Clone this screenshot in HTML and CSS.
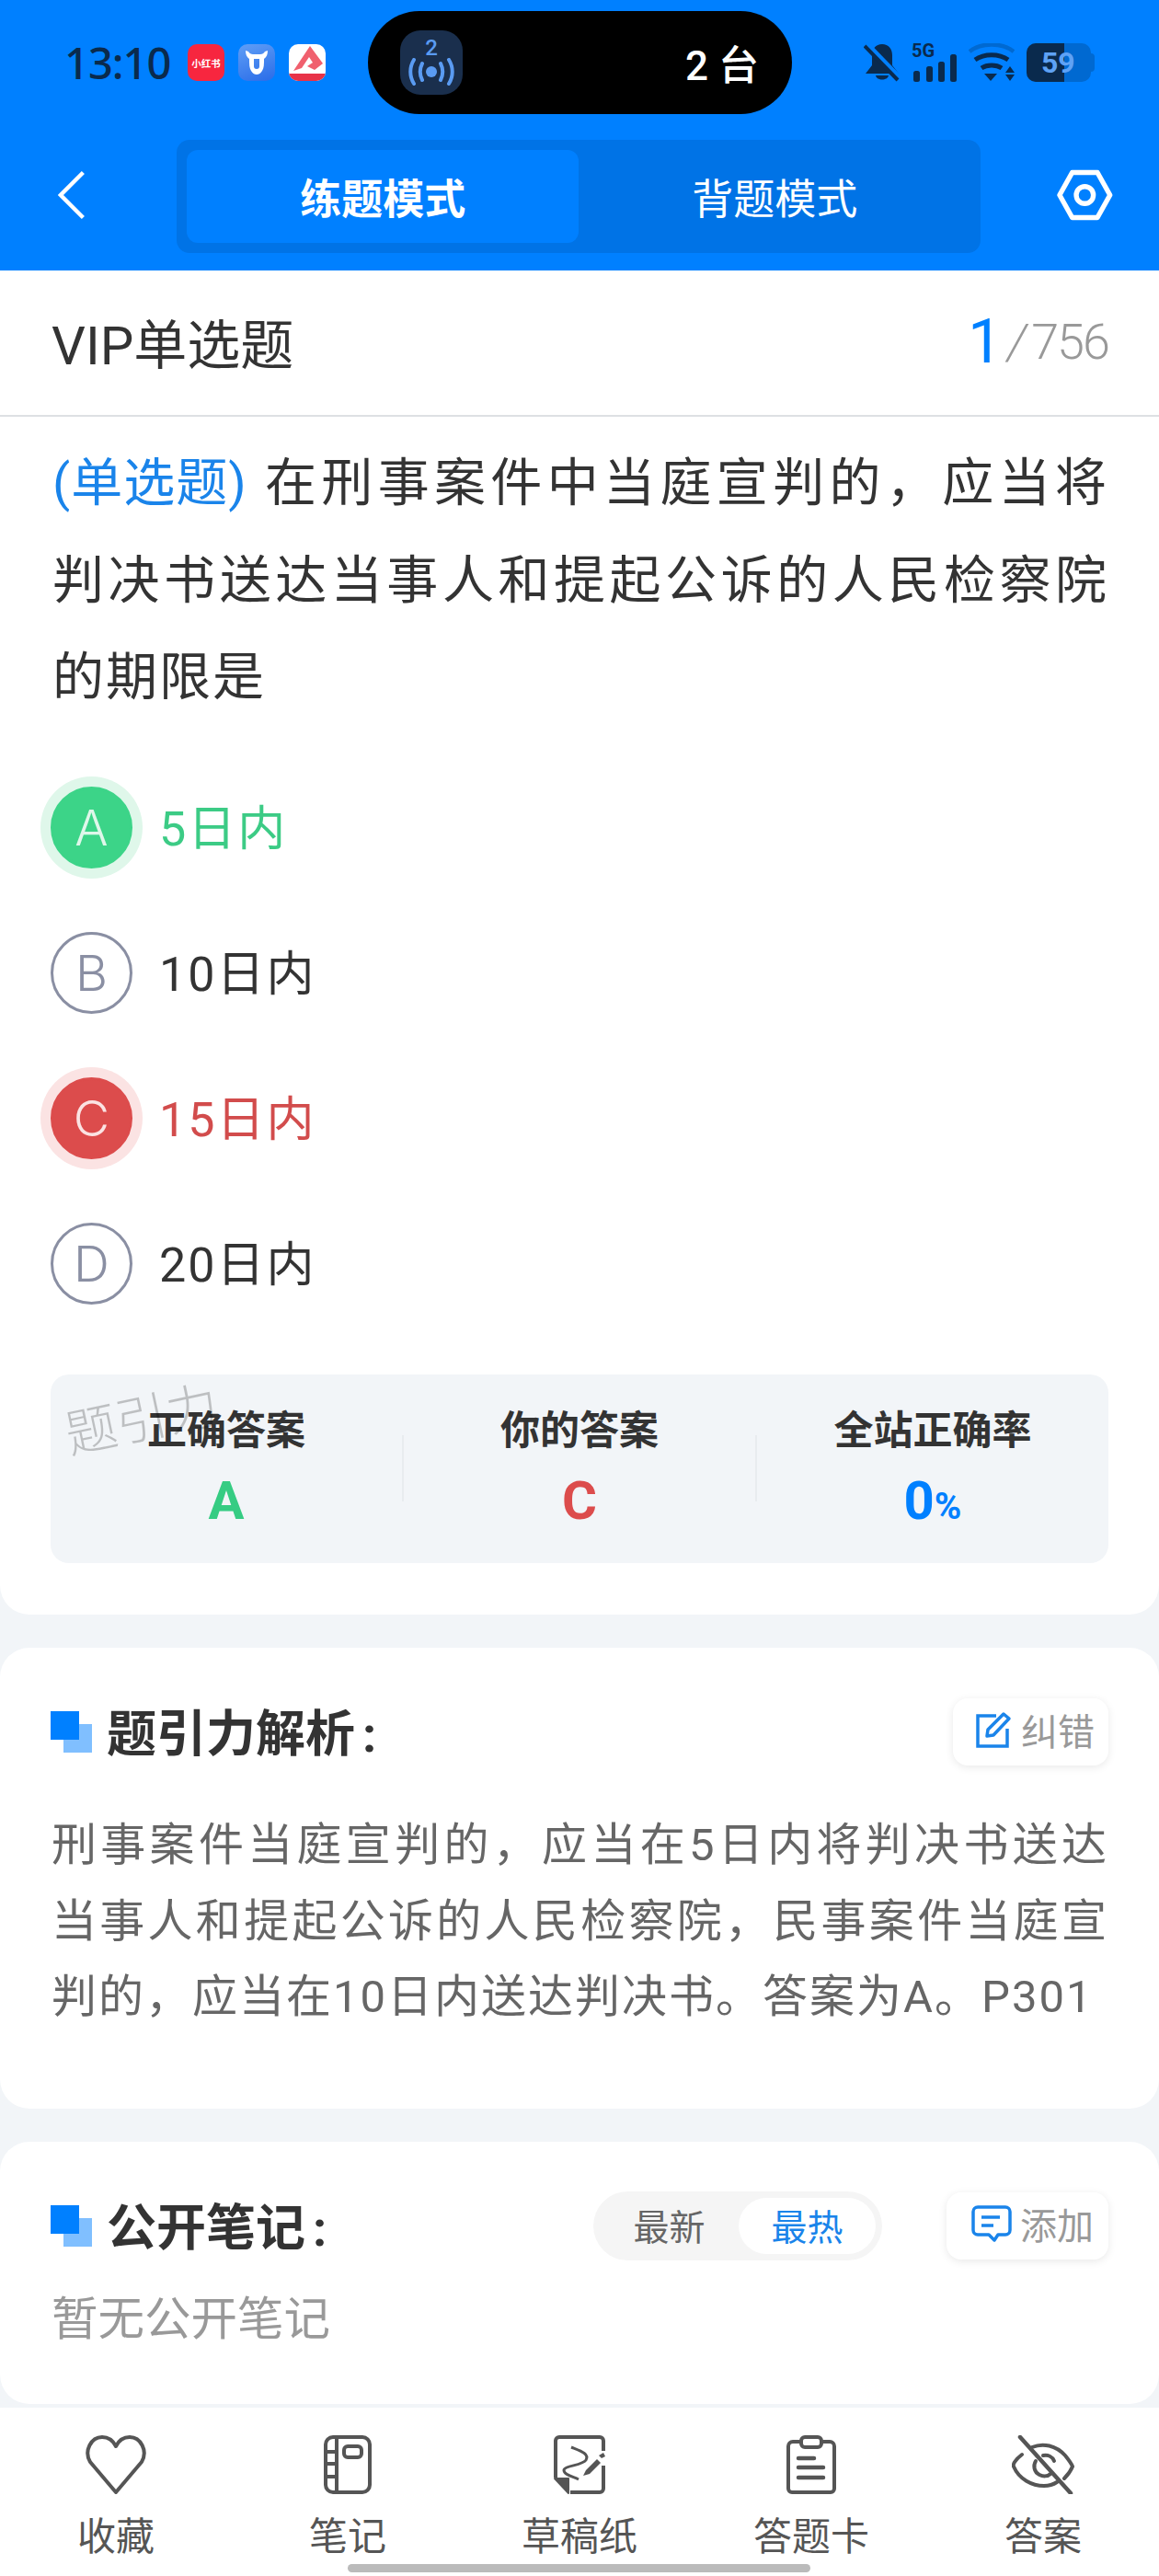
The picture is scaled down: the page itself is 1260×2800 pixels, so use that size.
FILE: index.html
```html
<!DOCTYPE html>
<html lang="zh-CN">
<head>
    <meta charset="UTF-8">
    <meta name="viewport" content="width=device-width, initial-scale=1.0">
    <title>练题模式</title>
    <link rel="stylesheet" href="styles.css">
</head>
<body>
    <div class="phone">
        <header class="top">
            <div class="status">
                <div class="status-left">
                    <span class="time">13:10</span>
                    <span class="app-icon app-red">小红书</span>
                    <span class="app-icon app-blue">
                        <svg viewBox="0 0 40 40" width="40" height="40"><path fill-rule="evenodd" fill="#fff" d="M8 7l3 1c1 2 3 3 5 3h8c2 0 4-1 5-3l3-1c0 4-1 7-4 9 0 6 0 10-2 13-2 3-4 4-6 4s-4-1-6-4c-2-3-2-7-2-13-3-2-4-5-4-9zM17 16v8c0 2 1 3 3 3s3-1 3-3v-8z"/></svg>
                    </span>
                    <span class="app-icon app-white">
                        <svg viewBox="0 0 40 40" width="40" height="40"><path d="M23 2L5 29l9-3 8-12 4 6-6 4 8 4 9-7z" fill="#f0606e"/><path d="M0 32h40v8H0z" fill="#e83348"/></svg>
                    </span>
                </div>
                <div class="island">
                    <div class="island-icon">
                        <span class="island-num">2</span>
                        <svg viewBox="0 0 50 30" width="50" height="30" fill="none" stroke="#5a9bf2" stroke-width="4" stroke-linecap="round"><circle cx="25" cy="15" r="6" fill="#5a9bf2" stroke="none"/><path d="M15 6c-3 6-3 12 0 18M35 6c3 6 3 12 0 18M6 2c-5 8-5 18 0 26M44 2c5 8 5 18 0 26"/></svg>
                    </div>
                    <span class="island-text">2 台</span>
                </div>
                <div class="status-right">
                    <svg viewBox="0 0 40 42" width="40" height="42"><path d="M20 1c-7 0-11 5-11 12v11l-7 9h36l-7-9V13c0-7-4-12-11-12z" fill="#0a2a4d"/><path d="M13 35c1 6 13 6 14 0z" fill="#0a2a4d"/><path d="M4 1l36 37" stroke="#0080ff" stroke-width="5"/><path d="M1 3l36 37" stroke="#0a2a4d" stroke-width="4"/></svg>
                    <div class="signal">
                        <span class="five-g">5G</span>
                        <svg viewBox="0 0 50 30" width="50" height="30" fill="#0a2a4d"><rect x="2" y="18" width="7" height="12" rx="2.5"/><rect x="16" y="13" width="7" height="17" rx="2.5"/><rect x="29" y="8" width="7" height="22" rx="2.5"/><rect x="42" y="0" width="7" height="30" rx="2.5"/></svg>
                    </div>
                    <svg viewBox="0 0 50 42" width="50" height="42"><path d="M1 9c13-10 35-10 48 0" fill="none" stroke="#0069d1" stroke-width="4.5"/><path d="M7 18c10-7 26-7 36 0M14 27c6-4 16-4 22 0" fill="none" stroke="#0a2a4d" stroke-width="5"/><path d="M17 33h14l-7 8z" fill="#0a2a4d"/><path d="M45 25l5 7H40zM45 41l5-7H40z" fill="#0a2a4d"/></svg>
                    <div class="battery">
                        <div class="battery-fill"></div>
                        <span class="battery-num">59</span>
                        <span class="battery-nub"></span>
                    </div>
                </div>
            </div>
            <nav class="nav">
                <svg class="back" viewBox="0 0 30 54" width="30" height="54" fill="none" stroke="#fff" stroke-width="4.5"><path d="M28 2L3 27l25 25"/></svg>
                <div class="tabs">
                    <div class="tab tab-on">练题模式</div>
                    <div class="tab">背题模式</div>
                </div>
                <svg class="gear" viewBox="0 0 62 56" width="62" height="56" fill="none" stroke="#fff" stroke-width="5.5" stroke-linejoin="round"><path d="M17 3h28l14 25-14 25H17L3 28z"/><circle cx="31" cy="28" r="9.5"/></svg>
            </nav>
        </header>

        <main class="scroll">
            <section class="card card-main">
                <div class="title-row">
                    <span class="title">VIP单选题</span>
                    <span class="count"><b>1</b><i>/</i><span>756</span></span>
                </div>
                <p class="question"><span class="q-type">(单选题)</span> 在刑事案件中当庭宣判的，应当将判决书送达当事人和提起公诉的人民检察院的期限是</p>

                <div class="options">
                    <div class="option opt-right"><span class="letter">A</span><span class="opt-text">5日内</span></div>
                    <div class="option"><span class="letter">B</span><span class="opt-text">10日内</span></div>
                    <div class="option opt-wrong"><span class="letter">C</span><span class="opt-text">15日内</span></div>
                    <div class="option"><span class="letter">D</span><span class="opt-text">20日内</span></div>
                </div>

                <div class="answer-box">
                    <span class="watermark">题引力</span>
                    <div class="answer-col">
                        <div class="answer-label">正确答案</div>
                        <div class="answer-val green">A</div>
                    </div>
                    <div class="answer-col">
                        <div class="answer-label">你的答案</div>
                        <div class="answer-val red">C</div>
                    </div>
                    <div class="answer-col">
                        <div class="answer-label">全站正确率</div>
                        <div class="answer-val blue">0<small>%</small></div>
                    </div>
                </div>
            </section>

            <section class="card card-analysis">
                <div class="card-head">
                    <span class="mark"></span>
                    <h2>题引力解析<span class="colon">:</span></h2>
                    <button class="action">
                        <svg viewBox="0 0 40 40" width="40" height="40" fill="none" stroke="#1a84ea" stroke-width="3.5"><path d="M22 5H2v33h32V19"/><path d="M13 20L30 3l6 5-17 18-7 1z" stroke-linejoin="round"/></svg>
                        纠错
                    </button>
                </div>
                <p class="analysis">刑事案件当庭宣判的，应当在5日内将判决书送达当事人和提起公诉的人民检察院，民事案件当庭宣判的，应当在10日内送达判决书。答案为A。P301</p>
            </section>

            <section class="card card-notes">
                <div class="card-head">
                    <span class="mark"></span>
                    <h2>公开笔记<span class="colon">:</span></h2>
                    <div class="seg">
                        <span class="seg-item">最新</span>
                        <span class="seg-item seg-on">最热</span>
                    </div>
                    <button class="action action-add">
                        <svg viewBox="0 0 44 40" width="44" height="40" fill="none" stroke="#1a84ea" stroke-width="3.5"><path d="M7 2h30a5 5 0 0 1 5 5v20a5 5 0 0 1-5 5h-8l-4 6-6-6H7a5 5 0 0 1-5-5V7a5 5 0 0 1 5-5z" stroke-linejoin="round"/><path d="M11 13h20M11 22h13"/></svg>
                        添加
                    </button>
                </div>
                <p class="empty">暂无公开笔记</p>
            </section>
        </main>

        <footer class="bottom">
            <div class="bottom-item">
                <svg viewBox="0 0 66 64" width="66" height="64" fill="none" stroke="#555" stroke-width="4" stroke-linejoin="round"><path d="M33 62L5 29C-2 17 6 2 18 2c7 0 12 4 15 10 3-6 8-10 15-10 12 0 20 15 13 27z"/></svg>
                <span>收藏</span>
            </div>
            <div class="bottom-item">
                <svg viewBox="0 0 52 64" width="52" height="64" fill="none" stroke="#555" stroke-width="4"><rect x="2" y="2" width="48" height="60" rx="8"/><path d="M14 2v60M2 18h12M2 31h12M2 45h12"/><rect x="22" y="12" width="19" height="12" rx="4"/></svg>
                <span>笔记</span>
            </div>
            <div class="bottom-item">
                <svg viewBox="0 0 58 64" width="58" height="64" fill="none" stroke="#555" stroke-width="4" stroke-linejoin="round"><path d="M3 46V6a4 4 0 0 1 4-4h44a4 4 0 0 1 4 4v11M55 33v25a4 4 0 0 1-4 4H19"/><path d="M2 47h15v16z" fill="#555" stroke-width="2"/><path d="M20 13c10 4 20 7 16 14-4 6-24 6-24 11s10 7 16 10" stroke-width="3"/><path d="M36 38l12-12 4 4-12 12-7 2z" fill="#555" stroke="none"/><path d="M50 22l5-3 2 4-4 2z" fill="#555" stroke="none"/></svg>
                <span>草稿纸</span>
            </div>
            <div class="bottom-item">
                <svg viewBox="0 0 56 64" width="56" height="64" fill="none" stroke="#555" stroke-width="4" stroke-linecap="round"><path d="M15 7H8a5 5 0 0 0-5 5v46a4 4 0 0 0 4 4h42a4 4 0 0 0 4-4V12a5 5 0 0 0-5-5h-7"/><rect x="17" y="2" width="22" height="11" rx="4"/><path d="M14 25h17M14 35h27M14 46h27" stroke-width="4.5"/></svg>
                <span>答题卡</span>
            </div>
            <div class="bottom-item">
                <svg viewBox="0 0 68 64" width="68" height="64" fill="none" stroke="#555" stroke-width="4" stroke-linecap="round"><path d="M11 21C3 27 1 32 2 34c6 14 20 21 33 21 6 0 11-2 14-4M22 13c12-5 26-2 36 9 4 5 7 9 8 12-2 5-6 10-9 13"/><path d="M26 28c-3 5-2 12 4 15 4 2 9 2 12-1M34 22c5-1 10 1 12 6"/><path d="M9 2l55 61" stroke-width="4.5"/></svg>
                <span>答案</span>
            </div>
            <div class="home-bar"></div>
        </footer>
    </div>
</body>
</html>
```

FILE: styles.css
```css
:root {
    --blue: #0080ff;
    --green: #3cd488;
    --red: #dc4c4c;
    --page: #f2f5f8;
}
* {
    box-sizing: border-box;
}
html, body {
    margin: 0;
    padding: 0;
}
body {
    font-family: Roboto, "Noto Sans CJK SC", sans-serif;
    background-color: var(--page);
    color: #333;
}
p, h2 {
    margin: 0;
}
.phone {
    position: relative;
    width: 1260px;
    height: 2800px;
    display: flex;
    flex-direction: column;
    overflow: hidden;
}

/* blue header */
.top {
    height: 294px;
    background-color: var(--blue);
    flex-shrink: 0;
}
.status {
    height: 152px;
    padding: 12px 0 0 70px;
    display: flex;
    align-items: flex-start;
}
.status-left {
    width: 330px;
    height: 112px;
    display: flex;
    align-items: center;
    gap: 15px;
}
.time {
    font-family: "Noto Sans", sans-serif;
    font-size: 47px;
    font-weight: 500;
    color: #0a2a4d;
    width: 119px;
    letter-spacing: -1px;
}
.app-icon {
    width: 40px;
    height: 40px;
    border-radius: 10px;
    overflow: hidden;
    display: flex;
    align-items: center;
    justify-content: center;
    flex-shrink: 0;
}
.app-red {
    background-color: #f7263f;
    color: #fff;
    font-size: 10.5px;
    font-weight: 700;
    white-space: nowrap;
}
.app-blue {
    background: linear-gradient(160deg, #5f9ef6, #2a6ce8);
}
.app-white {
    background-color: #fff;
}
.island {
    width: 461px;
    height: 112px;
    flex-shrink: 0;
    border-radius: 56px;
    background-color: #000;
    padding: 0 36px 0 35px;
    display: flex;
    align-items: center;
    justify-content: space-between;
}
.island-icon {
    width: 68px;
    height: 70px;
    border-radius: 22px;
    background-color: #1a2f4d;
    display: flex;
    flex-direction: column;
    align-items: center;
    padding-top: 8px;
}
.island-num {
    font-size: 24px;
    line-height: 22px;
    font-weight: 500;
    color: #5a9bf2;
}
.island-text {
    color: #fff;
    font-size: 44px;
    font-weight: 500;
}
.status-right {
    margin-left: 78px;
    height: 112px;
    display: flex;
    align-items: center;
    gap: 12px;
}
.signal {
    position: relative;
    width: 50px;
    height: 42px;
    display: flex;
    align-items: flex-end;
}
.five-g {
    position: absolute;
    left: 0;
    top: -3px;
    font-size: 20px;
    line-height: 22px;
    font-weight: 700;
    color: #0a2a4d;
}
.battery {
    position: relative;
    width: 70px;
    height: 42px;
    border-radius: 10px;
    background-color: #0069d1;
    margin-left: 1px;
}
.battery-fill {
    width: 41px;
    height: 42px;
    background-color: #0a2a4d;
    border-radius: 10px 0 0 10px;
}
.battery-num {
    position: absolute;
    left: 16px;
    top: 0;
    font-size: 32px;
    line-height: 42px;
    font-weight: 700;
    color: #5ea2f5;
}
.battery-nub {
    position: absolute;
    right: -4px;
    top: 11px;
    width: 4px;
    height: 20px;
    border-radius: 0 4px 4px 0;
    background-color: #0069d1;
}
.nav {
    height: 142px;
    padding: 0 50px 19px 63px;
    display: flex;
    align-items: center;
    justify-content: space-between;
}
.back, .gear {
    margin-top: -4px;
}
.tabs {
    width: 874px;
    height: 123px;
    margin-left: 100px;
    margin-right: 83px;
    padding: 11px;
    background-color: #0073e6;
    border-radius: 14px;
    display: flex;
    flex-shrink: 0;
}
.tab {
    flex: 1;
    display: flex;
    align-items: center;
    justify-content: center;
    color: #fff;
    font-size: 45px;
    border-radius: 12px;
}
.tab-on {
    background-color: var(--blue);
    font-weight: 700;
}

/* scrolling part */
.scroll {
    flex: 1;
    display: flex;
    flex-direction: column;
    gap: 36px;
    overflow: hidden;
}
.card {
    background-color: #fff;
}
.card-main {
    height: 1461px;
    padding: 0 55px;
    border-radius: 0 0 32px 32px;
}
.title-row {
    height: 159px;
    margin: 0 -55px;
    padding: 0 55px 0 56px;
    border-bottom: 2px solid #dde0e3;
    display: flex;
    justify-content: space-between;
    align-items: center;
}
.title {
    font-size: 58px;
    margin-top: -4px;
}
.count {
    display: flex;
    align-items: center;
    font-size: 54px;
    font-weight: 300;
    letter-spacing: -2px;
    color: #999;
    margin-top: -2px;
}
.count b {
    font-size: 66px;
    font-weight: 400;
    color: var(--blue);
}
.count i {
    margin: 0 7px 0 8px;
}
.question {
    margin-top: 20px;
    padding-left: 2px;
    font-size: 56px;
    line-height: 105.5px;
    letter-spacing: 2px;
    text-align: justify;
}
.q-type {
    display: inline-block;
    color: #1a84ea;
    letter-spacing: 1px;
}
.options {
    margin-top: 65px;
    display: flex;
    flex-direction: column;
    gap: 68px;
}
.option {
    display: flex;
    align-items: center;
    gap: 29px;
    height: 90px;
}
.letter {
    width: 89px;
    height: 89px;
    border: 3px solid #8a8fa3;
    border-radius: 50%;
    color: #8a8fa3;
    font-family: Inter, sans-serif;
    font-size: 54px;
    font-weight: 300;
    display: flex;
    align-items: center;
    justify-content: center;
    flex-shrink: 0;
}
.opt-text {
    font-size: 52px;
    letter-spacing: 2px;
    margin-top: -7px;
}
.opt-right .letter {
    background-color: var(--green);
    border-color: var(--green);
    color: #dff7ea;
    box-shadow: 0 0 0 11px #dff7ea;
}
.opt-right .opt-text {
    color: #3ccb85;
}
.opt-wrong .letter {
    background-color: var(--red);
    border-color: var(--red);
    color: #fbe3e3;
    box-shadow: 0 0 0 11px #fbe3e3;
}
.opt-wrong .opt-text {
    color: #d24c4c;
}
.answer-box {
    position: relative;
    margin-top: 75px;
    height: 205px;
    background-color: var(--page);
    border-radius: 20px;
    display: flex;
    align-items: center;
}
.answer-col {
    flex: 1;
    height: 72px;
    display: flex;
    flex-direction: column;
    align-items: center;
    border-right: 2px solid #e8ecef;
}
.answer-col:last-child {
    border-right: none;
}
.answer-label {
    margin-top: -35px;
    font-size: 43px;
    line-height: 60px;
    font-weight: 700;
}
.answer-val {
    margin-top: 8px;
    font-size: 58px;
    line-height: 76px;
    font-weight: 700;
}
.answer-val small {
    font-size: 40px;
}
.green {
    color: #36cc83;
}
.red {
    color: var(--red);
}
.blue {
    color: var(--blue);
}
.watermark {
    position: absolute;
    left: 14px;
    top: 4px;
    font-size: 56px;
    font-weight: 300;
    color: rgba(0, 0, 0, 0.22);
    transform: rotate(-12deg);
}
.card-analysis {
    height: 501px;
    border-radius: 32px;
    padding: 55px 55px 0;
}
.card-notes {
    height: 285px;
    border-radius: 32px;
    padding: 55px 55px 0;
}
.card-head {
    display: flex;
    align-items: center;
    height: 73px;
}
.mark {
    position: relative;
    width: 45px;
    height: 45px;
    margin-right: 16px;
    flex-shrink: 0;
}
.mark::before, .mark::after {
    content: "";
    position: absolute;
    width: 31px;
    height: 31px;
}
.mark::before {
    right: 0;
    bottom: 0;
    background-color: #80bfff;
}
.mark::after {
    left: 0;
    top: 0;
    background-color: var(--blue);
}
h2 {
    font-size: 54px;
    font-weight: 700;
    flex: 1;
    padding-bottom: 4px;
}
.colon {
    margin-left: 8px;
}
.action {
    height: 73px;
    padding: 0 15px 5px 25px;
    border: none;
    border-radius: 16px;
    background-color: #fff;
    box-shadow: 0 2px 10px rgba(0, 0, 0, 0.09);
    color: #999;
    font-family: inherit;
    font-size: 40px;
    display: flex;
    align-items: center;
    gap: 9px;
}
.action-add {
    width: 176px;
    padding-left: 27px;
}
.analysis {
    margin-top: 46px;
    padding-left: 1px;
    font-size: 49px;
    line-height: 82.5px;
    letter-spacing: 2px;
    color: #666;
    text-align: justify;
}
.seg {
    width: 314px;
    height: 75px;
    margin-right: 70px;
    padding: 7px;
    background-color: #f5f5f5;
    border-radius: 38px;
    display: flex;
}
.seg-item {
    flex: 1;
    display: flex;
    align-items: center;
    justify-content: center;
    padding-bottom: 4px;
    border-radius: 31px;
    font-size: 39px;
    color: #666;
}
.seg-on {
    flex: 0 0 149px;
    background-color: #fff;
    color: #1a84ea;
}
.empty {
    margin-top: 23px;
    padding-left: 1px;
    font-size: 50.5px;
    color: #999;
}

/* bottom bar */
.bottom {
    height: 183px;
    background-color: #fff;
    display: flex;
    flex-shrink: 0;
    padding-top: 30px;
    margin-top: 4px;
}
.bottom-item {
    flex: 1;
    display: flex;
    flex-direction: column;
    align-items: center;
    color: #555;
    font-size: 42px;
    line-height: 60px;
}
.bottom-item span {
    margin-top: 17px;
}
.home-bar {
    position: absolute;
    left: 378px;
    bottom: 4px;
    width: 503px;
    height: 9px;
    border-radius: 5px;
    background-color: #bbb;
}
```
